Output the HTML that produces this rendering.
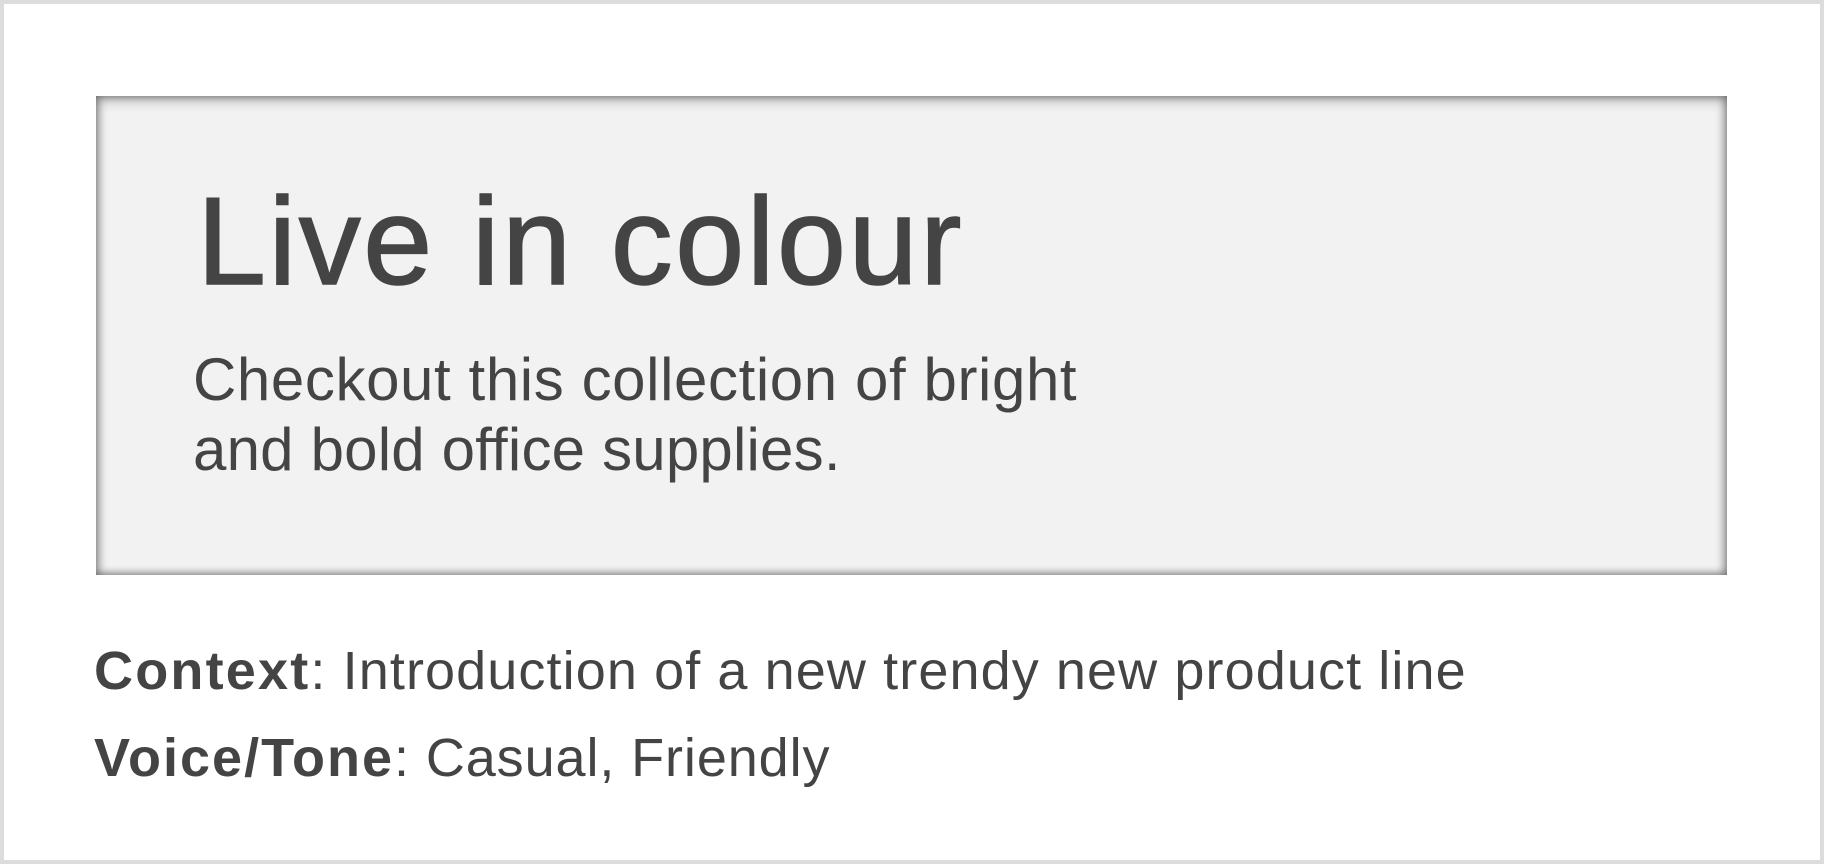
<!DOCTYPE html>
<html><head><meta charset="utf-8"><style>
html,body{margin:0;padding:0;}
body{width:1824px;height:864px;position:relative;background:#fff;font-family:"Liberation Sans",sans-serif;color:#444;overflow:hidden;}
.frame{position:absolute;left:0;top:0;width:1824px;height:864px;box-sizing:border-box;border:4px solid #dcdcdc;}
.box{position:absolute;left:96px;top:96px;width:1631px;height:479px;background:#f2f2f2;box-shadow:inset 0 4px 12px rgba(0,0,0,.3),inset 0 -3px 8px rgba(0,0,0,.18),inset 4px 0 8px rgba(0,0,0,.18),inset -4px 0 8px rgba(0,0,0,.18);}
.t{position:absolute;white-space:nowrap;line-height:1;}
</style></head><body>
<div class="frame"></div>
<div class="box"></div>
<div class="t" style="left:197px;top:180px;font-size:124px;letter-spacing:2.6px;-webkit-text-stroke:1.5px #444;">Live in colour</div>
<div class="t" style="left:193px;top:350px;font-size:60px;letter-spacing:0.6px;">Checkout this collection of bright</div>
<div class="t" style="left:193px;top:420px;font-size:60px;letter-spacing:0.2px;">and bold office supplies.</div>
<div class="t" style="left:94px;top:644px;font-size:54px;letter-spacing:1.1px;"><b style="font-weight:900;letter-spacing:2.2px;">Context</b>: Introduction of a new trendy new product line</div>
<div class="t" style="left:94px;top:731px;font-size:54px;letter-spacing:0.9px;"><b style="font-weight:900;letter-spacing:2px;">Voice/Tone</b>: Casual, Friendly</div>
</body></html>
